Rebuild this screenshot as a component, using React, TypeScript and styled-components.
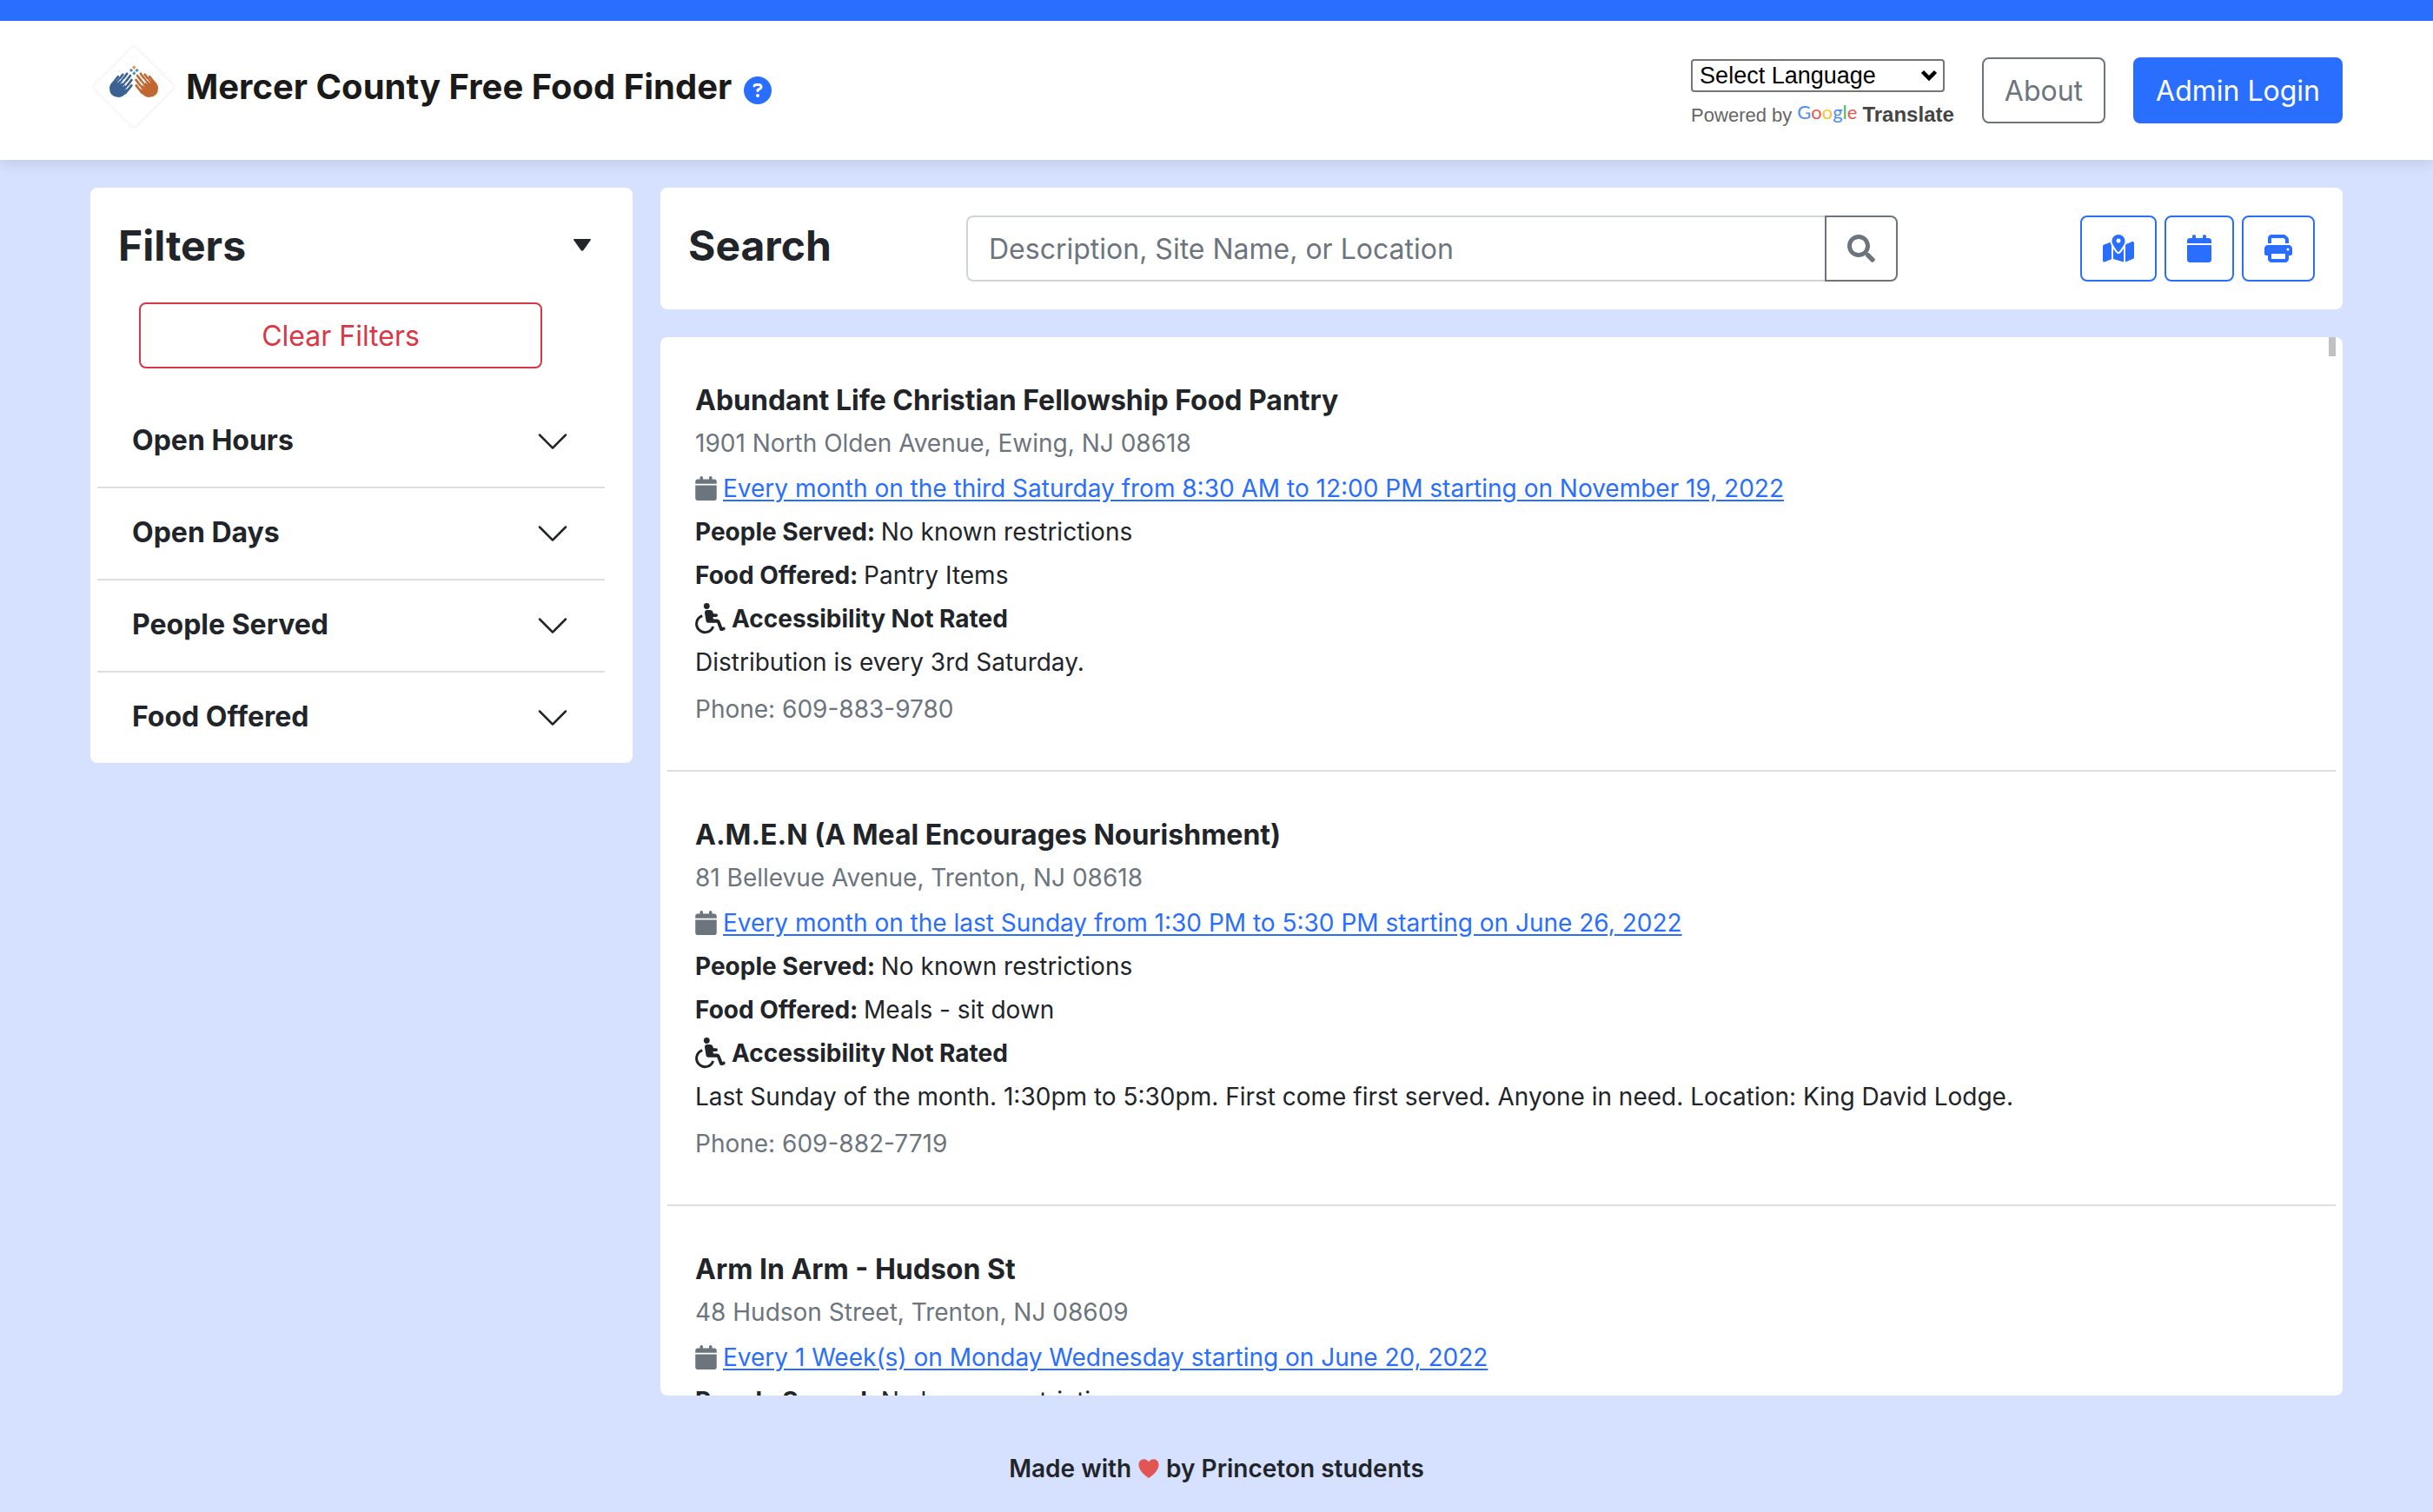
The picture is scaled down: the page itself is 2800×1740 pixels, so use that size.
import React from "react";
import styled, { createGlobalStyle } from "styled-components";
import {
  FaCalendar,
  FaCircleQuestion,
  FaMapLocationDot,
  FaPrint,
} from "react-icons/fa6";
import { FaSearch } from "react-icons/fa";

const GlobalStyle = createGlobalStyle`
  *, *::before, *::after { box-sizing: border-box; }
  body {
    margin: 0;
    background: #d6e0ff;
    color: #212529;
    font-family: Inter, "Liberation Sans", sans-serif;
    font-size: 28px;
    line-height: 42px;
  }
  h1, h2, h3, p { margin: 0; }
  button, input { font-family: inherit; }
`;

const Page = styled.div`
  height: 100vh;
  display: flex;
  flex-direction: column;
`;

const Header = styled.header`
  display: flex;
  align-items: center;
  justify-content: space-between;
  flex: none;
  height: 184px;
  padding: 0 104px;
  border-top: 24px solid #296eff;
  background: #fff;
  box-shadow: 0 4px 16px rgba(0, 0, 0, 0.1);
`;

const Brand = styled.div`
  display: flex;
  align-items: center;
`;

const Logo = styled.svg`
  width: 100px;
  height: 100px;
  margin-bottom: 8px;
`;

const SiteTitle = styled.h1`
  margin: 0 14px 8px 10px;
  color: #1a1a1a;
  font-size: 40px;
  font-weight: 700;
  line-height: 48px;
`;

const HelpButton = styled.button`
  display: flex;
  padding: 0;
  border: 0;
  background: none;
  color: #296eff;
  font-size: 32px;
`;

const HeaderActions = styled.div`
  display: flex;
  align-items: center;
  gap: 32px;
`;

const Translate = styled.div`
  display: flex;
  flex-direction: column;
  align-items: flex-start;
  gap: 12px;
  padding-top: 6px;
  font-family: "Liberation Sans", Arial, sans-serif;
`;

const SelectBox = styled.div`
  position: relative;
  display: flex;

  svg {
    position: absolute;
    top: 12px;
    right: 8px;
    pointer-events: none;
  }
`;

const LanguageSelect = styled.select`
  appearance: none;
  width: 292px;
  height: 38px;
  padding: 0 32px 0 8px;
  border: 2px solid #767676;
  border-radius: 4px;
  background: #fff;
  color: #000;
  font-family: "Liberation Sans", Arial, sans-serif;
  font-size: 27px;
`;

const PoweredBy = styled.div`
  display: flex;
  align-items: baseline;
  gap: 6px;
  color: #666;
  font-size: 22px;
  line-height: 28px;
  white-space: nowrap;

  strong { color: #444; font-size: 24px; }
`;

const GoogleWord = styled.span`
  align-self: flex-start;
  font-family: Lato, sans-serif;
  line-height: 22px;
`;

const Tint = styled.span<{ $color: string }>`
  color: ${(p) => p.$color};
`;

const Button = styled.button<{ $color: string; $filled?: boolean }>`
  display: flex;
  align-items: center;
  justify-content: center;
  height: 76px;
  padding: 2px 24px 0;
  border: 2px solid ${(p) => p.$color};
  border-radius: 8px;
  background: ${(p) => (p.$filled ? p.$color : "#fff")};
  color: ${(p) => (p.$filled ? "#fff" : p.$color)};
  font-size: 32px;
  line-height: 48px;
  white-space: nowrap;
`;

const IconButton = styled(Button)<{ $icon: number }>`
  padding: 0 24px;

  svg {
    width: ${(p) => p.$icon}px;
    height: 32px;
  }
`;

const Main = styled.main`
  display: grid;
  grid-template-columns: 624px minmax(0, 1fr);
  gap: 32px;
  flex: 1;
  min-height: 0;
  padding: 32px 104px 0;
`;

const Panel = styled.section`
  border-radius: 8px;
  background: #fff;
`;

const FilterPanel = styled(Panel)`
  align-self: start;
`;

const PanelTitle = styled.h2`
  font-size: 48px;
  font-weight: 700;
  line-height: 58px;
`;

const FilterHead = styled.div`
  display: flex;
  align-items: center;
  justify-content: space-between;
  padding: 38px 48px 0 32px;
`;

const CollapseButton = styled.button`
  display: flex;
  padding: 0 0 2px;
  border: 0;
  background: none;
  color: #212529;
`;

const ClearButton = styled(Button)`
  width: 464px;
  margin: 36px 0 32px 56px;
`;

const FilterList = styled.div`
  margin: 0 32px 0 8px;
`;

const FilterToggle = styled.button`
  display: flex;
  align-items: center;
  justify-content: space-between;
  width: 100%;
  height: 106px;
  padding: 0 40px;
  border: 0;
  border-bottom: 2px solid #dfdfdf;
  background: #fff;
  color: #212529;
  font-size: 32px;
  font-weight: 700;
  line-height: 38px;

  span { padding-bottom: 2px; }

  &:last-child { border-bottom: 0; height: 104px; }
`;

const Content = styled.div`
  display: flex;
  flex-direction: column;
  gap: 32px;
  min-height: 0;
`;

const SearchPanel = styled(Panel)`
  display: grid;
  grid-template-columns: 320px minmax(0, 1fr) 480px;
  align-items: center;
  padding: 32px;
`;

const SearchTitle = styled(PanelTitle)`
  padding-bottom: 6px;
`;

const SearchForm = styled.form`
  display: flex;
`;

const SearchInput = styled.input`
  flex: 1;
  min-width: 0;
  height: 76px;
  padding: 0 24px;
  border: 2px solid #ced4da;
  border-right: 0;
  border-radius: 8px 0 0 8px;
  background: #fff;
  color: #212529;
  font-size: 32px;

  &::placeholder { color: #6c757d; opacity: 1; }
`;

const SearchButton = styled(IconButton)`
  border-radius: 0 8px 8px 0;
`;

const Tools = styled.div`
  display: flex;
  justify-content: flex-end;
  gap: 9px;
`;

const ResultsPanel = styled(Panel)`
  position: relative;
  flex: 1;
  min-height: 0;
  padding: 0 8px;
  overflow: hidden;
`;

const ScrollThumb = styled.div`
  position: absolute;
  top: 0;
  right: 8px;
  width: 8px;
  height: 22px;
  background: #c1c1c1;
`;

const Site = styled.article`
  display: flex;
  flex-direction: column;
  gap: 8px;
  padding: 53px 32px 49px;
  border-bottom: 2px solid #dfdfdf;
`;

const SiteName = styled.h3`
  font-size: 32px;
  font-weight: 700;
  line-height: 40px;
`;

const Line = styled.p<{ $muted?: boolean }>`
  color: ${(p) => (p.$muted ? "#6c757d" : "inherit")};
`;

const IconLine = styled.p`
  display: flex;
  align-items: center;
  gap: 7px;

  a { color: #296eff; text-underline-offset: 3px; }
`;

const ScheduleLine = styled(IconLine)`
  padding-top: 2px;

  svg {
    width: 25px;
    height: 28px;
    color: #6c757d;
  }
`;

const Phone = styled.p`
  padding-top: 4px;
  color: #6c757d;
`;

const Footer = styled.footer`
  display: flex;
  align-items: center;
  justify-content: center;
  gap: 8px;
  flex: none;
  height: 134px;
  padding-top: 34px;
  font-weight: 600;
`;

const filters = ["Open Hours", "Open Days", "People Served", "Food Offered"];

const sites = [
  {
    name: "Abundant Life Christian Fellowship Food Pantry",
    address: "1901 North Olden Avenue, Ewing, NJ 08618",
    schedule: "Every month on the third Saturday from 8:30 AM to 12:00 PM starting on November 19, 2022",
    food: "Pantry Items",
    note: "Distribution is every 3rd Saturday.",
    phone: "609-883-9780",
  },
  {
    name: "A.M.E.N (A Meal Encourages Nourishment)",
    address: "81 Bellevue Avenue, Trenton, NJ 08618",
    schedule: "Every month on the last Sunday from 1:30 PM to 5:30 PM starting on June 26, 2022",
    food: "Meals - sit down",
    note: "Last Sunday of the month. 1:30pm to 5:30pm. First come first served. Anyone in need. Location: King David Lodge.",
    phone: "609-882-7719",
  },
  {
    name: "Arm In Arm - Hudson St",
    address: "48 Hudson Street, Trenton, NJ 08609",
    schedule: "Every 1 Week(s) on Monday Wednesday starting on June 20, 2022",
  },
];

const googleLetters: [string, string][] = [
  ["G", "#4f8df5"],
  ["o", "#ee5549"],
  ["o", "#fbc32a"],
  ["g", "#4f8df5"],
  ["l", "#4bb268"],
  ["e", "#ee5549"],
];

function Hand({ color }: { color: string }) {
  return (
    <g>
      <path
        d="M26 44 L33 42 L42 50 L42.500 55 Q38.500 62 32.500 62 Q22 61.500 22 51.500 Q22 47 26 44Z"
        fill={color}
      />
      <g stroke={color} strokeWidth="2.700" strokeLinecap="round" fill="none">
        <path d="M32 38.200 L26.500 45" />
        <path d="M37.300 35.800 L29.500 46" />
        <path d="M42.200 34.800 L33 47" />
        <path d="M46 37 L36 50" />
        <path d="M47.500 42 L39 53" />
        <path d="M47.300 48.300 L40.500 57" />
      </g>
      <path
        d="M34.600 41.200 L31.600 45 M39 41 L35 46.200 M42 44.300 L38 49.300 M43.300 49.500 L40.500 53"
        stroke="#fff"
        strokeWidth="0.800"
        strokeLinecap="round"
      />
    </g>
  );
}

function BrandLogo() {
  return (
    <Logo viewBox="0 0 100 100" role="img" aria-label="Two helping hands">
      <g transform="rotate(45 50 50)">
        <rect x="13" y="13" width="74" height="74" rx="8" opacity="0.010" />
        <rect x="15" y="15" width="70" height="70" rx="6" opacity="0.015" />
        <rect x="16" y="16" width="68" height="68" rx="5" opacity="0.012" />
        <rect x="17" y="17" width="66" height="66" rx="4" fill="#fff" />
      </g>
      <Hand color="#3b6293" />
      <g transform="translate(100 0) scale(-1 1)">
        <Hand color="#c16730" />
      </g>
      <path d="M50.300 25.300 l2.300 2.300 l-2.300 2.300 l-2.300 -2.300z" fill="#f29a35" />
      <path
        d="M47 28.700 l2.200 2.200 l-2.200 2.200 l-2.200 -2.200z M53.600 28.700 l2.200 2.200 l-2.200 2.200 l-2.200 -2.200z M50.300 32.200 l2.200 2.200 l-2.200 2.200 l-2.200 -2.200z"
        fill="#4a90c4"
      />
    </Logo>
  );
}

function Chevron() {
  return (
    <svg width="40" height="40" viewBox="0 0 16 16" fill="#212529" aria-hidden="true">
      <path
        fillRule="evenodd"
        d="M1.646 4.646a.5.5 0 0 1 .708 0L8 10.293l5.646-5.647a.5.5 0 0 1 .708.708l-6 6a.5.5 0 0 1-.708 0l-6-6a.5.5 0 0 1 0-.708z"
      />
    </svg>
  );
}

function Wheelchair() {
  return (
    <svg width="35" height="36" viewBox="0 0 35 36" fill="none" stroke="currentColor" aria-hidden="true">
      <circle cx="13.300" cy="3.500" r="3.400" fill="currentColor" stroke="none" />
      <path
        d="M11 11 Q11 8 14 8 H17.500 Q20 8 20.500 10.500 L21 12.300 H24 Q26 12.500 26 14.200 Q26 16 24 16 H20.500 L21 18.500 H25 Q27.500 18.500 28.500 20.700 L31.300 28 L32.200 27.700 Q34 27.300 34.700 28.800 Q35 30.500 33.500 31.200 L31 32 Q29 32.500 28.200 30.700 L25.200 22.800 H15 Q13 22.800 12.600 20.800Z"
        fill="currentColor"
        stroke="none"
      />
      <path d="M8.300 14.600 A9.800 9.800 0 1 0 20.700 27" strokeWidth="2.900" />
    </svg>
  );
}

function Heart() {
  return (
    <svg width="24" height="22" viewBox="0 0 24 22" fill="#e25555" aria-label="love">
      <path d="M12 22C5.500 17.500.5 12.500.5 6.500.5 2.700 3.200.3 6.400.3 9 .3 11.200 1.700 12 3.600 12.800 1.700 15 .3 17.600.3c3.200 0 5.900 2.400 5.900 6.200 0 6-5 11-11.500 15.500z" />
    </svg>
  );
}

export default function App() {
  return (
    <Page>
      <GlobalStyle />
      <Header>
        <Brand>
          <BrandLogo />
          <SiteTitle>Mercer County Free Food Finder</SiteTitle>
          <HelpButton type="button" aria-label="Help">
            <FaCircleQuestion />
          </HelpButton>
        </Brand>
        <HeaderActions>
          <Translate>
            <SelectBox>
              <LanguageSelect aria-label="Select Language">
                <option>Select Language</option>
              </LanguageSelect>
              <svg width="20" height="14" viewBox="0 0 20 14" fill="none" aria-hidden="true">
                <path d="M2.500 2.500 L10 10 L17.500 2.500" stroke="#000" strokeWidth="4.500" />
              </svg>
            </SelectBox>
            <PoweredBy>
              <span>Powered by</span>
              <GoogleWord>
                {googleLetters.map(([letter, color], i) => (
                  <Tint key={i} $color={color}>{letter}</Tint>
                ))}
              </GoogleWord>
              <strong>Translate</strong>
            </PoweredBy>
          </Translate>
          <Button type="button" $color="#6c757d">About</Button>
          <Button type="button" $color="#296eff" $filled>Admin Login</Button>
        </HeaderActions>
      </Header>

      <Main>
        <FilterPanel>
          <FilterHead>
            <PanelTitle>Filters</PanelTitle>
            <CollapseButton type="button" aria-label="Collapse filters">
              <svg width="20" height="14" viewBox="0 0 20 14" fill="currentColor" aria-hidden="true">
                <path d="M1 0h18q1.500 0 .6 1.500l-8.200 11.500q-1.400 1.500-2.800 0L.4 1.500Q-.5 0 1 0z" />
              </svg>
            </CollapseButton>
          </FilterHead>
          <ClearButton type="button" $color="#dc3545">Clear Filters</ClearButton>
          <FilterList>
            {filters.map((name) => (
              <FilterToggle type="button" key={name} aria-expanded={false}>
                <span>{name}</span>
                <Chevron />
              </FilterToggle>
            ))}
          </FilterList>
        </FilterPanel>

        <Content>
          <SearchPanel>
            <SearchTitle>Search</SearchTitle>
            <SearchForm onSubmit={(e) => e.preventDefault()}>
              <SearchInput
                type="text"
                aria-label="Search sites"
                placeholder="Description, Site Name, or Location"
              />
              <SearchButton type="submit" $color="#6c757d" $icon={32} aria-label="Search">
                <FaSearch />
              </SearchButton>
            </SearchForm>
            <Tools>
              <IconButton type="button" $color="#296eff" $icon={36} aria-label="Map view">
                <FaMapLocationDot />
              </IconButton>
              <IconButton type="button" $color="#296eff" $icon={28} aria-label="Calendar view">
                <FaCalendar />
              </IconButton>
              <IconButton type="button" $color="#296eff" $icon={32} aria-label="Print">
                <FaPrint />
              </IconButton>
            </Tools>
          </SearchPanel>

          <ResultsPanel>
            {sites.map((site) => (
              <Site key={site.name}>
                <SiteName>{site.name}</SiteName>
                <Line $muted>{site.address}</Line>
                <ScheduleLine>
                  <FaCalendar />
                  <a href="#schedule">{site.schedule}</a>
                </ScheduleLine>
                <Line><strong>People Served: </strong>No known restrictions</Line>
                {site.food && <Line><strong>Food Offered: </strong>{site.food}</Line>}
                {site.note && (
                  <IconLine>
                    <Wheelchair />
                    <strong>Accessibility Not Rated</strong>
                  </IconLine>
                )}
                {site.note && <Line>{site.note}</Line>}
                {site.phone && <Phone>Phone: {site.phone}</Phone>}
              </Site>
            ))}
            <ScrollThumb />
          </ResultsPanel>
        </Content>
      </Main>

      <Footer>
        <span>Made with</span>
        <Heart />
        <span>by Princeton students</span>
      </Footer>
    </Page>
  );
}
